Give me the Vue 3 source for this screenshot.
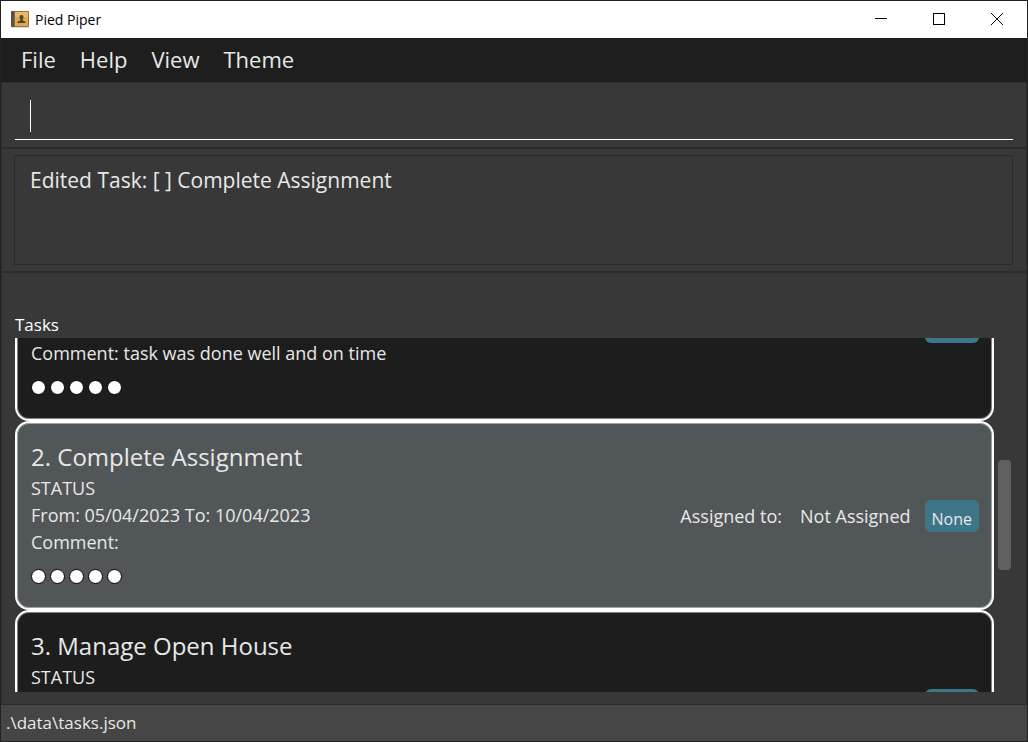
<script setup>
import { ref, onMounted } from 'vue'

const menus = ['File', 'Help', 'View', 'Theme']
const command = ref('')
const result = ref('Edited Task: [ ] Complete Assignment')
const tasks = [
  { id: 1, lines: ['', '', 'Comment: task was done well and on time'] },
  {
    id: 2,
    title: 'Complete Assignment',
    lines: ['STATUS', 'From: 05/04/2023 To: 10/04/2023', 'Comment:'],
    assignee: 'Not Assigned',
    tag: 'None',
    selected: true,
  },
  { id: 3, title: 'Manage Open House', lines: ['STATUS', '', ''] },
]
const thumb = { top: 34.5, size: 31 }
const list = ref(null)

onMounted(() => {
  list.value.scrollTop = 106
})
</script>

<template>
  <div class="window">
    <header class="titlebar">
      <svg class="app-icon" width="18" height="17" viewBox="0 0 18 17" aria-hidden="true">
        <rect x="1" y="15" width="17" height="2" fill="#dcdcdc" />
        <rect x="0" y="0" width="18" height="16" rx="1" fill="#9a7438" />
        <rect x="4" y="1" width="13" height="14" fill="#dda950" />
        <rect x="4" y="1" width="13" height="5" fill="#e6ba6a" />
        <rect x="0" y="0" width="3" height="16" rx="1" fill="#5e4f4a" />
        <rect x="3" y="0" width="1" height="16" fill="#8b6a3c" />
        <path d="M10.500 4a2 2 0 0 1 2 2.200c0 1-.5 1.500-.8 2v1.200c1.300.3 3 .7 3 2.600H6.300c0-1.900 1.700-2.300 3-2.600V8.200c-.3-.5-.8-1-.8-2a2 2 0 0 1 2-2.200z" fill="#58452f" />
      </svg>
      <span class="app-name">Pied Piper</span>
      <div class="controls">
        <button type="button" aria-label="Minimize">
          <svg width="12" height="12" viewBox="0 0 12 12"><path d="M0 5.500h12" stroke="#000" /></svg>
        </button>
        <button type="button" aria-label="Maximize">
          <svg width="12" height="12" viewBox="0 0 12 12"><rect x=".5" y=".5" width="11" height="11" fill="none" stroke="#000" /></svg>
        </button>
        <button type="button" aria-label="Close">
          <svg width="12" height="12" viewBox="0 0 12 12"><path d="M0 0l12 12M12 0L0 12" stroke="#000" /></svg>
        </button>
      </div>
    </header>

    <nav class="menubar">
      <button v-for="m in menus" :key="m" type="button">{{ m }}</button>
    </nav>

    <section class="command">
      <div class="field">
        <span class="caret"></span>
        <input v-model="command" type="text" aria-label="Command" />
      </div>
    </section>

    <section class="result">
      <textarea v-model="result" readonly aria-label="Result"></textarea>
    </section>

    <main class="tasks">
      <h1>Tasks</h1>
      <div class="scroller">
        <ul ref="list">
          <li v-for="t in tasks" :key="t.id" :class="{ selected: t.selected }">
            <div class="details">
              <h2><template v-if="t.title">{{ t.id }}. {{ t.title }}</template></h2>
              <p v-for="(line, i) in t.lines" :key="i">{{ line }}</p>
              <div class="dots"><i v-for="n in 5" :key="n"></i></div>
            </div>
            <div class="assign">
              <template v-if="t.assignee">
                <span>Assigned to:</span>
                <span>{{ t.assignee }}</span>
              </template>
              <span class="tag">{{ t.tag }}</span>
            </div>
          </li>
        </ul>
        <div class="track">
          <div class="thumb" :style="{ top: thumb.top + '%', height: thumb.size + '%' }"></div>
        </div>
      </div>
    </main>

    <footer class="status">.\data\tasks.json</footer>
  </div>
</template>

<style>
body {
  margin: 0;
  background: #202020;
}
</style>

<style scoped>
.window {
  box-sizing: border-box;
  height: 100vh;
  display: flex;
  flex-direction: column;
  border: 1px solid #222;
  background: #383838;
  color: #e8e8e8;
  font-family: "Open Sans", "Noto Sans", sans-serif;
  overflow: hidden;
}
button,
input,
textarea {
  font: inherit;
  color: inherit;
  border: 0;
  padding: 0;
  margin: 0;
  background: none;
  outline: none;
}
.titlebar {
  height: 37px;
  flex: none;
  display: flex;
  align-items: center;
  background: #fff;
  color: #000;
  padding-left: 10px;
}
.app-name {
  margin-left: 6px;
  font-size: 14px;
}
.controls {
  margin-left: auto;
  display: flex;
  height: 36px;
  align-self: flex-start;
  padding-right: 1px;
}
.controls button {
  width: 58px;
  display: flex;
  align-items: center;
  justify-content: center;
}
.menubar {
  flex: none;
  box-sizing: border-box;
  height: 44px;
  display: flex;
  align-items: center;
  gap: 24px;
  padding: 0 0 2px 20px;
  background: #1e1e1e;
  font-size: 22px;
}
.command {
  flex: none;
  box-sizing: border-box;
  height: 67px;
  padding: 9px 13px 7px;
  border: 2px solid #2c2c2c;
  border-width: 1px 1px 2px;
}
.field {
  height: 100%;
  box-sizing: border-box;
  display: flex;
  align-items: center;
  padding: 0 15px;
  border-bottom: 1px solid #fff;
}
.caret {
  width: 1px;
  height: 32px;
  background: #fff;
}
.field input {
  flex: 1;
  font-size: 22px;
  caret-color: transparent;
}
.result {
  flex: none;
  box-sizing: border-box;
  height: 124px;
  padding: 6px 13px 6px 12px;
  border: solid #2c2c2c;
  border-width: 0 1px 2px;
}
.result textarea {
  box-sizing: border-box;
  display: block;
  width: 100%;
  height: 110px;
  padding: 9px 15px;
  border: 1px solid #2a2a2a;
  resize: none;
  font-size: 21px;
  line-height: 30px;
}
.tasks {
  flex: 1;
  min-height: 0;
  display: flex;
  flex-direction: column;
  padding: 39px 13px 12px;
  border: solid #2c2c2c;
  border-width: 0 1px;
}
h1 {
  margin: 0;
  font-size: 17px;
  font-weight: 400;
  line-height: 26px;
  color: #fff;
}
.scroller {
  flex: 1;
  min-height: 0;
  display: flex;
  gap: 4px;
}
ul {
  flex: 1;
  margin: 0;
  padding: 0;
  list-style: none;
  overflow-y: auto;
  scrollbar-width: none;
}
li {
  box-sizing: border-box;
  height: 189px;
  display: flex;
  justify-content: space-between;
  padding: 15px 13px 0 14px;
  border: 2px solid #fff;
  border-radius: 14px;
  background: #1d1d1d;
  box-shadow: inset 0 0 0 1px rgba(255, 255, 255, 0.45);
  font-size: 18px;
}
li.selected {
  background: #515658;
}
h2 {
  margin: 0;
  height: 37px;
  font-size: 24px;
  font-weight: 400;
  line-height: 37px;
}
p {
  margin: 0;
  height: 27px;
  line-height: 27px;
}
.dots {
  display: flex;
  gap: 4px;
  margin-top: 13px;
}
.dots i {
  box-sizing: border-box;
  width: 15px;
  height: 15px;
  border: 1px solid #000;
  border-radius: 50%;
  background: #fff;
}
.assign {
  display: flex;
  align-items: center;
  gap: 18px;
  padding-bottom: 15px;
}
.tag {
  box-sizing: border-box;
  min-width: 54px;
  height: 32px;
  margin-left: -4px;
  padding: 6px 7px 0;
  border-radius: 6px;
  background: #3e7589;
  font-size: 16px;
  line-height: 27px;
}
.track {
  position: relative;
  width: 13px;
  margin-right: 2px;
}
.thumb {
  position: absolute;
  width: 100%;
  border-radius: 4px;
  background: #606060;
}
.status {
  flex: none;
  box-sizing: border-box;
  height: 37px;
  padding-left: 5px;
  border-top: 1px solid #2c2c2c;
  background: #454545;
  font-size: 17px;
  line-height: 36px;
}
</style>
